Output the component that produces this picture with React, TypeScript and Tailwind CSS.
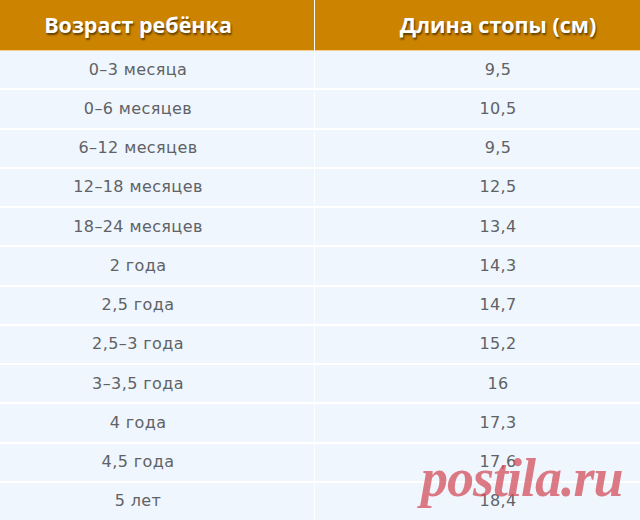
import React from "react";

const rows: [string, string][] = [
  ["0–3 месяца", "9,5"],
  ["0–6 месяцев", "10,5"],
  ["6–12 месяцев", "9,5"],
  ["12–18 месяцев", "12,5"],
  ["18–24 месяцев", "13,4"],
  ["2 года", "14,3"],
  ["2,5 года", "14,7"],
  ["2,5–3 года", "15,2"],
  ["3–3,5 года", "16"],
  ["4 года", "17,3"],
  ["4,5 года", "17,6"],
  ["5 лет", "18,4"],
];

export default function App() {
  return (
    <div className="relative w-[640px] h-[520px] overflow-hidden bg-[#eff6fd]">
      <div className="grid grid-cols-[314px_1fr] gap-x-[1px] bg-[#ffffff]">
        <div className="h-[51px] bg-[#cc8400] flex items-center justify-center pr-[38px] border-b border-[#f3cf8c] text-white text-[21.5px] font-bold [font-family:'Open_Sans',sans-serif] [text-shadow:1px_2px_2px_rgba(0,0,0,0.55)]">
          Возраст ребёнка
        </div>
        <div className="h-[51px] bg-[#cc8400] flex items-center justify-center pl-[41px] border-b border-[#f3cf8c] text-white text-[21.5px] font-bold [font-family:'Open_Sans',sans-serif] [text-shadow:1px_2px_2px_rgba(0,0,0,0.55)]">
          Длина стопы (см)
        </div>
        {rows.map(([a, b], i) => (
          <React.Fragment key={i}>
            <div className="h-[39.25px] bg-[#eff6fd] border-b-2 border-white flex items-center justify-center pr-[38px] text-[16px] tracking-[0.4px] text-[#606266] [font-family:'DejaVu_Sans',sans-serif]">
              {a}
            </div>
            <div className="h-[39.25px] bg-[#eff6fd] border-b-2 border-white flex items-center justify-center pl-[41px] text-[16px] tracking-[0.4px] text-[#606266] [font-family:'DejaVu_Sans',sans-serif]">
              {b}
            </div>
          </React.Fragment>
        ))}
      </div>
      <div className="absolute left-[421px] top-[451px] text-[54px] leading-none italic font-bold text-[#d4505c] opacity-75 [font-family:'Liberation_Serif',serif] tracking-[-1px]">
        postila.ru
      </div>
    </div>
  );
}
